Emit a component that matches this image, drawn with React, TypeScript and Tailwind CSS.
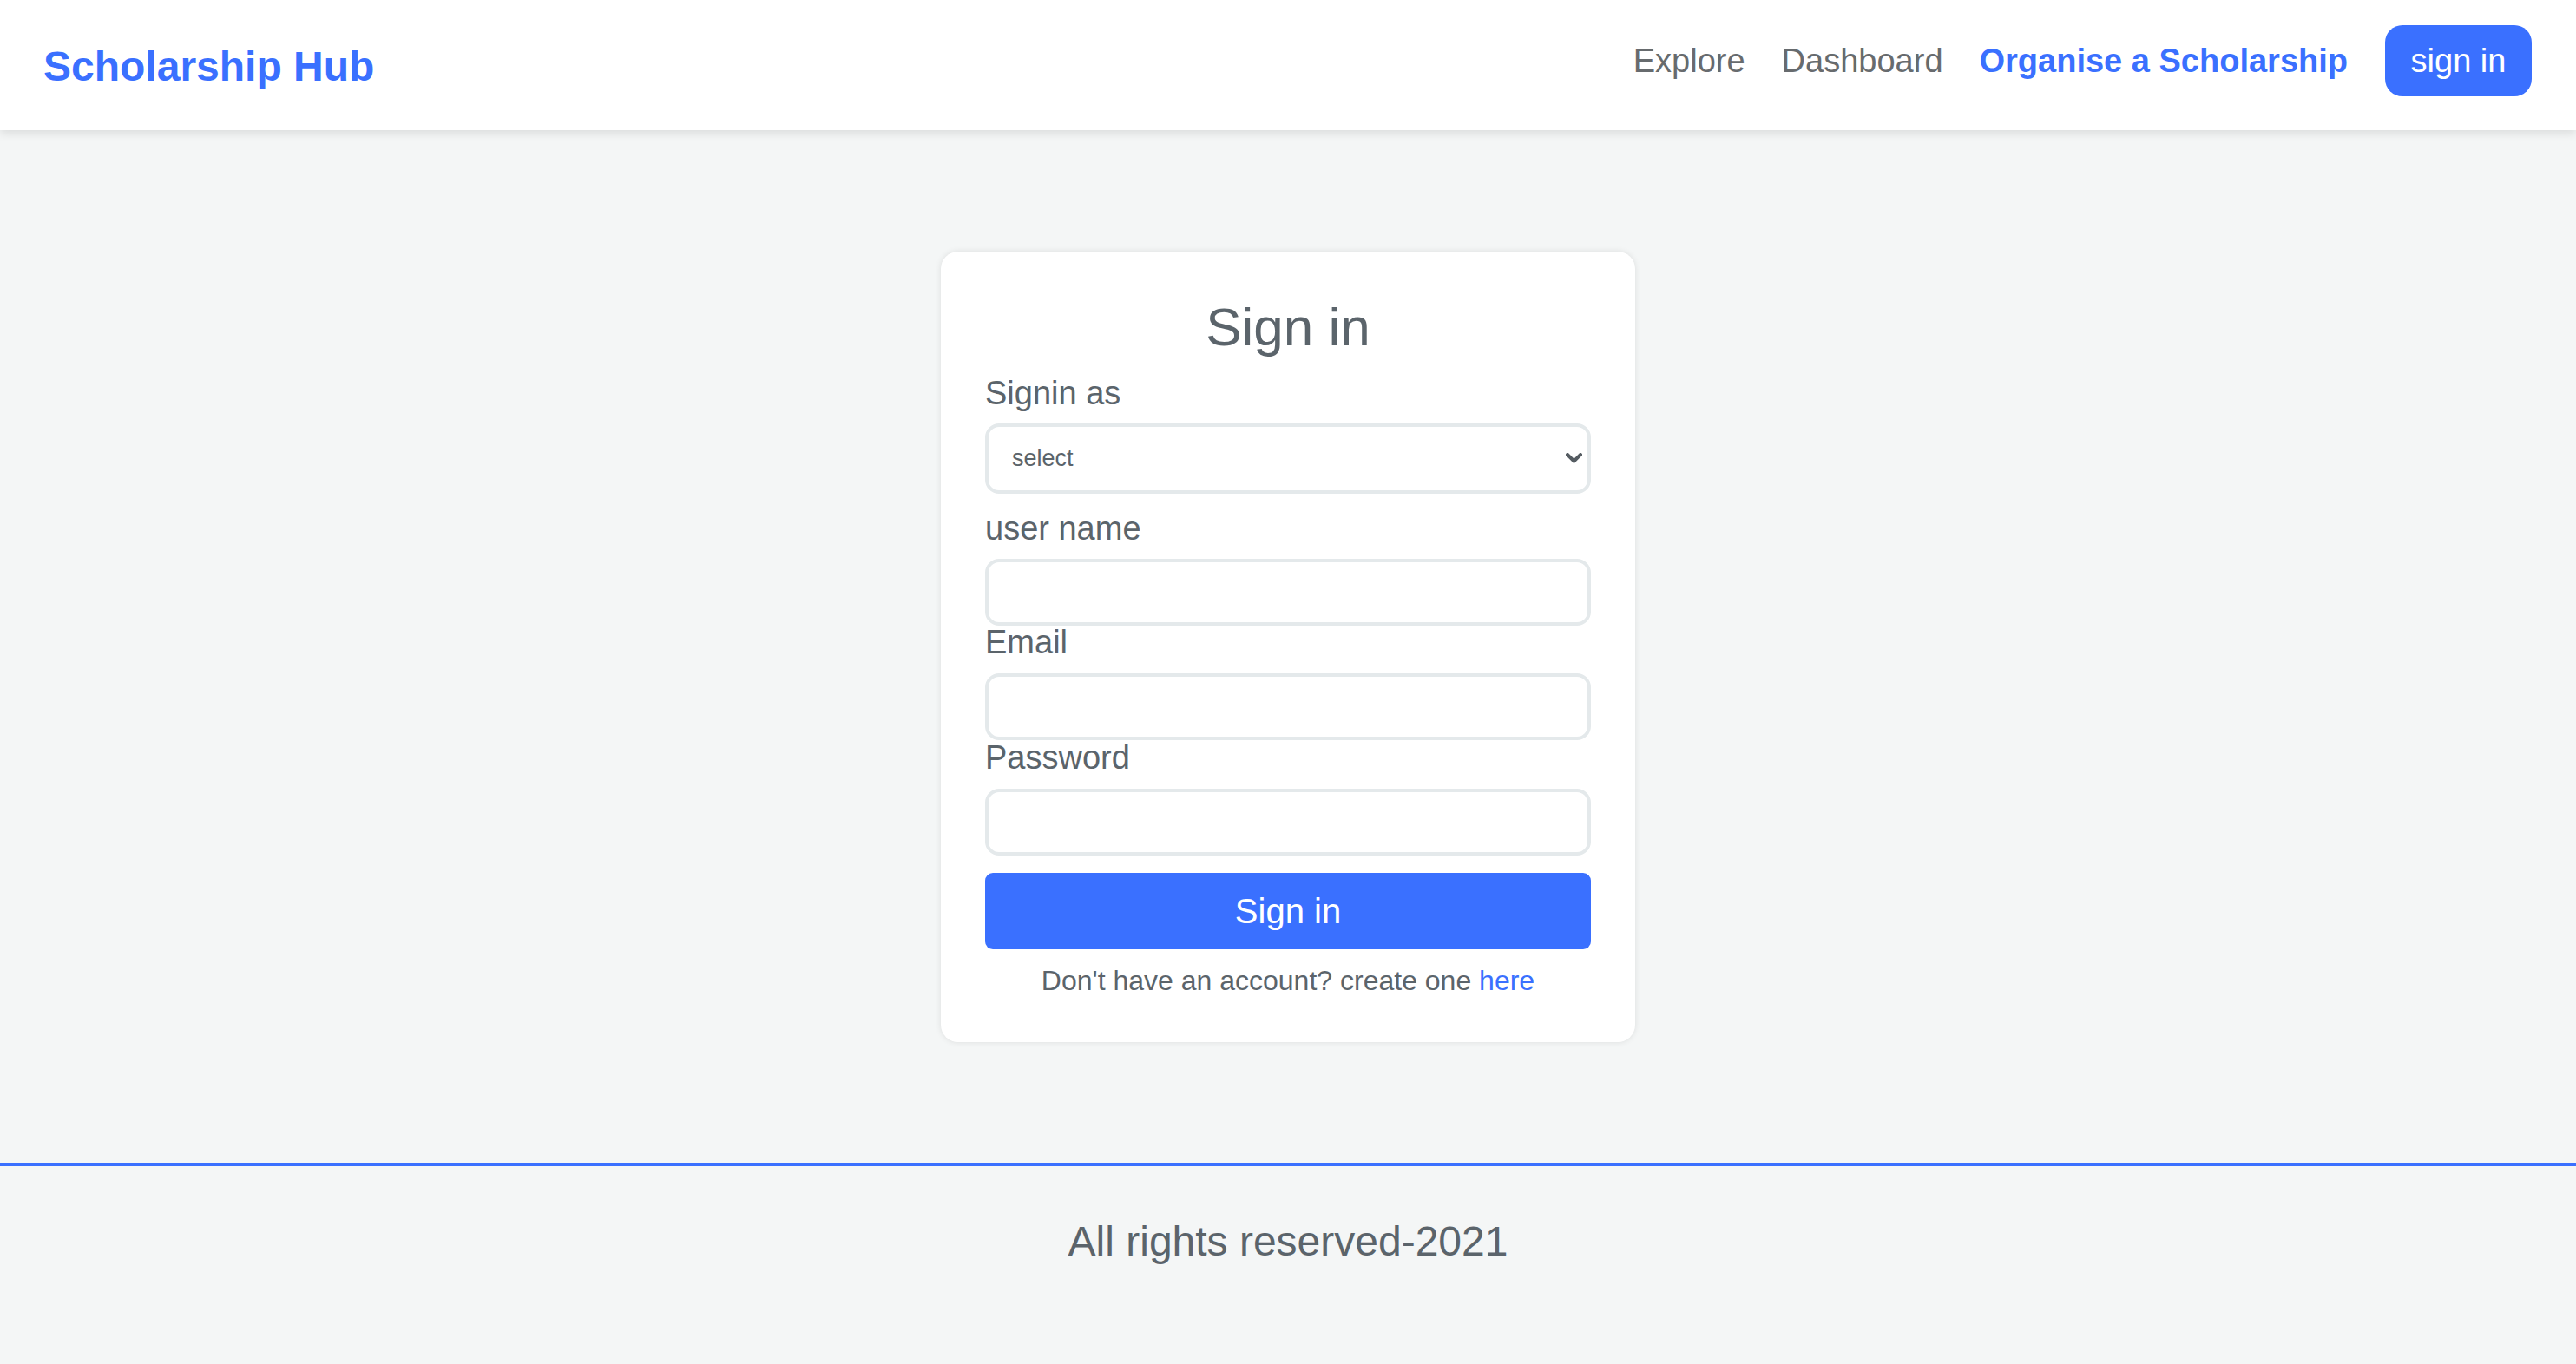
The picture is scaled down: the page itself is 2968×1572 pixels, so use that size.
import React from "react";

const font = { fontFamily: '"Liberation Sans", Arial, sans-serif' };

function Field({
  label,
  mt,
  inputMt,
  type = "text",
}: {
  label: string;
  mt: string;
  inputMt: string;
  type?: string;
}) {
  return (
    <>
      <label className={`${mt} block text-[38px] leading-[38px] text-[#5b646b]`}>{label}</label>
      <input
        type={type}
        className={`${inputMt} block h-[77px] w-full rounded-[16px] border-4 border-[#e4e9eb] bg-white px-[27px] text-[27px] text-[#5b646b] outline-none`}
      />
    </>
  );
}

export default function App() {
  return (
    <div className="min-h-screen bg-[#f4f6f6]" style={font}>
      <header className="relative z-10 flex h-[150px] items-center justify-between bg-white pl-[50px] pr-[51px] shadow-[0_4px_10px_rgba(0,0,0,0.10)]">
        <a className="mt-[3px] text-[48px] font-bold leading-[54px] text-[#3a70ff]">Scholarship Hub</a>
        <nav className="mb-[10px] flex items-center">
          <a className="text-[38px] leading-[38px] text-[#676b6e]">Explore</a>
          <a className="ml-[42px] text-[38px] leading-[38px] text-[#676b6e]">Dashboard</a>
          <a className="ml-[42px] text-[38px] font-bold leading-[38px] text-[#3a70ff]">Organise a Scholarship</a>
          <button className="ml-[43px] flex h-[82px] w-[169px] items-center justify-center rounded-[20px] bg-[#3a70ff] text-[38px] leading-[38px] text-white">
            sign in
          </button>
        </nav>
      </header>

      <main className="flex h-[1190px] items-start justify-center pt-[140px]">
        <div className="w-[800px] rounded-[20px] bg-white px-[51px] pt-[52px] pb-[55px] shadow-[0_0_7px_rgba(0,0,0,0.10)]">
          <h1 className="text-center text-[62px] leading-[70px] text-[#5b646b]">Sign in</h1>
          <label className="mt-[22px] block text-[38px] leading-[38px] text-[#5b646b]">Signin as</label>
          <div className="relative mt-[16px] h-[81px] w-full">
            <select className="block h-[81px] w-full appearance-none rounded-[16px] border-4 border-[#e4e9eb] bg-white pl-[27px] text-[27px] text-[#5b646b] outline-none">
              <option>select</option>
              <option>Student</option>
              <option>Organiser</option>
            </select>
            <svg
              className="pointer-events-none absolute right-[10px] top-[34px]"
              width="19"
              height="12"
              viewBox="0 0 19 12"
              fill="none"
            >
              <path d="M2 2 L9.5 9.5 L17 2" stroke="#555c62" strokeWidth="4" strokeLinecap="square" />
            </svg>
          </div>
          <Field label="user name" mt="mt-[21px]" inputMt="mt-[16px]" />
          <Field label="Email" mt="mt-0" inputMt="mt-[17px]" type="email" />
          <Field label="Password" mt="mt-[1px]" inputMt="mt-[17px]" type="password" />
          <button className="mt-[20px] flex h-[88px] w-full items-center justify-center rounded-[9px] bg-[#3a70ff] text-[40px] leading-[40px] text-white">
            Sign in
          </button>
          <p className="mt-[20px] text-center text-[32px] leading-[32px] text-[#5b646b]">
            Don't have an account? create one <a className="text-[#3a70ff]">here</a>
          </p>
        </div>
      </main>

      <footer className="h-[232px] border-t-4 border-[#3a70ff] bg-[#f4f6f6] pt-[60px] text-center">
        <p className="text-[48px] leading-[54px] text-[#5b646b]">All rights reserved-2021</p>
      </footer>
    </div>
  );
}
